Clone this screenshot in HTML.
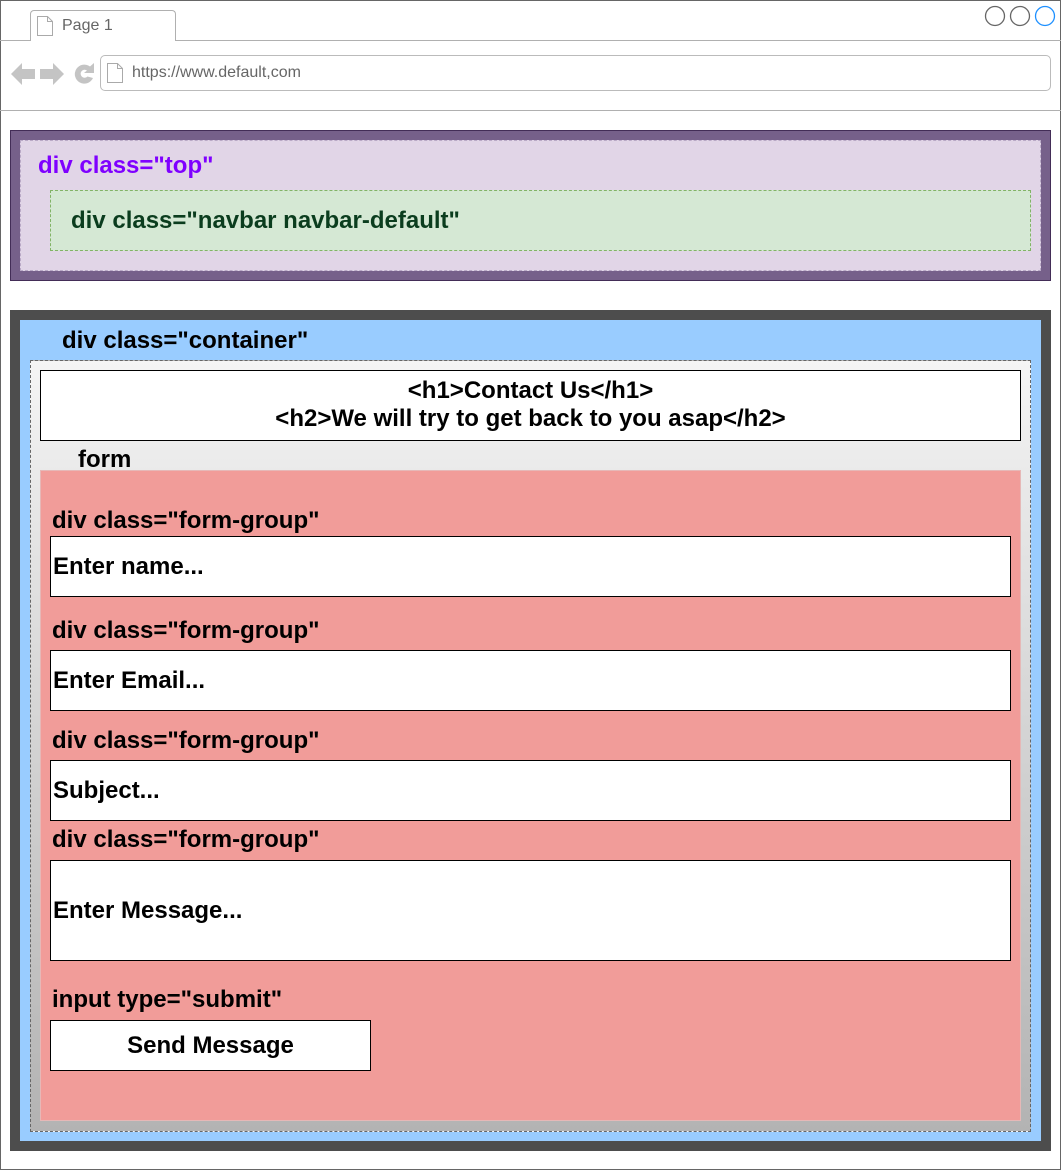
<!DOCTYPE html>
<html><head><meta charset="utf-8"><style>
*{margin:0;padding:0;box-sizing:border-box}
body{width:1061px;height:1170px;position:relative;background:#fff;font-family:"Liberation Sans",Arial,sans-serif;overflow:hidden}
.a{position:absolute}
.b{font-weight:bold;font-size:24px;color:#000;white-space:nowrap}
.inp{position:absolute;left:50px;width:961px;background:#fff;border:1px solid #000;font-weight:bold;font-size:24px;padding-left:2px;display:flex;align-items:center}
</style></head><body>
<div class="a" style="left:0;top:0;width:1061px;height:1170px;border:1px solid #666"></div>
<!-- tab -->
<div class="a" style="left:30px;top:10px;width:146px;height:31px;border:1px solid #b0b0b0;border-bottom:none;border-radius:4px 4px 0 0;background:#fff"></div>
<div class="a" style="left:0;top:40px;width:30px;height:1px;background:#b0b0b0"></div>
<div class="a" style="left:176px;top:40px;width:885px;height:1px;background:#b0b0b0"></div>
<svg class="a" style="left:36px;top:15px" width="18" height="22"><path d="M1.5 1.5h10l5 5v14h-15z M11.5 1.5v5h5" fill="#fff" stroke="#aaa"/></svg>
<div class="a" style="left:62px;top:17px;font-size:16px;color:#666">Page 1</div>
<svg class="a" style="left:984px;top:5px" width="75" height="22">
<circle cx="11" cy="11" r="9.5" fill="none" stroke="#666" stroke-width="1.3"/>
<circle cx="36" cy="11" r="9.5" fill="none" stroke="#666" stroke-width="1.3"/>
<circle cx="61" cy="11" r="9.5" fill="none" stroke="#1e90ff" stroke-width="1.3"/></svg>
<!-- nav icons -->
<svg class="a" style="left:10px;top:62px" width="88" height="26">
<path d="M1 12 L12 1 V7 H25 V17 H12 V23 Z" fill="#c4c4c4"/>
<path d="M54 12 L43 1 V7 H30 V17 H43 V23 Z" fill="#c4c4c4"/>
<path d="M80 4.5 A9.5 9.5 0 1 0 83 16 L77.5 14.5 A4 4 0 1 1 77 8.5 L74 11 H84 V1 Z" fill="#c4c4c4"/>
</svg>
<div class="a" style="left:100px;top:55px;width:951px;height:36px;border:1px solid #bbb;border-radius:5px"></div>
<svg class="a" style="left:106px;top:62px" width="18" height="22"><path d="M1.5 1.5h10l5 5v14h-15z M11.5 1.5v5h5" fill="#fff" stroke="#aaa"/></svg>
<div class="a" style="left:132px;top:64px;font-size:16px;color:#666">https://www.default,com</div>
<div class="a" style="left:0;top:110px;width:1061px;height:1px;background:#b0b0b0"></div>
<!-- top -->
<div class="a" style="left:10px;top:130px;width:1041px;height:151px;background:#76608a;border:1px solid #432d57"></div>
<div class="a" style="left:20px;top:140px;width:1021px;height:131px;background:#e1d5e7;border:1px dashed #b9a9c6"></div>
<div class="a b" style="left:38px;top:152px;color:#7f00ff">div class="top"</div>
<div class="a" style="left:50px;top:190px;width:981px;height:61px;background:#d5e8d4;border:1px dashed #82b366"></div>
<div class="a b" style="left:71px;top:207px;color:#0b3d1e">div class="navbar navbar-default"</div>
<!-- container -->
<div class="a" style="left:10px;top:310px;width:1041px;height:841px;background:#4d4d4d"></div>
<div class="a" style="left:20px;top:320px;width:1021px;height:821px;background:#99ccff"></div>
<div class="a b" style="left:62px;top:327px">div class="container"</div>
<div class="a" style="left:30px;top:360px;width:1001px;height:772px;background:linear-gradient(#f5f5f5,#e6e6e6 20%,#b3b3b3);border:1px dashed #666"></div>
<div class="a" style="left:40px;top:370px;width:981px;height:71px;background:#fff;border:1px solid #000"></div>
<div class="a b" style="left:40px;top:377px;width:981px;text-align:center;line-height:28px">&lt;h1&gt;Contact Us&lt;/h1&gt;<br>&lt;h2&gt;We will try to get back to you asap&lt;/h2&gt;</div>
<div class="a b" style="left:78px;top:446px">form</div>
<div class="a" style="left:40px;top:470px;width:981px;height:651px;background:#f19c99;border:1px solid #e6b8b7"></div>
<div class="a b" style="left:52px;top:507px">div class="form-group"</div>
<div class="inp" style="top:536px;height:61px">Enter name...</div>
<div class="a b" style="left:52px;top:617px">div class="form-group"</div>
<div class="inp" style="top:650px;height:61px">Enter Email...</div>
<div class="a b" style="left:52px;top:727px">div class="form-group"</div>
<div class="inp" style="top:760px;height:61px">Subject...</div>
<div class="a b" style="left:52px;top:826px">div class="form-group"</div>
<div class="inp" style="top:860px;height:101px">Enter Message...</div>
<div class="a b" style="left:52px;top:986px">input type="submit"</div>
<div class="inp" style="top:1020px;height:51px;width:321px;justify-content:center;padding:0">Send Message</div>
</body></html>
